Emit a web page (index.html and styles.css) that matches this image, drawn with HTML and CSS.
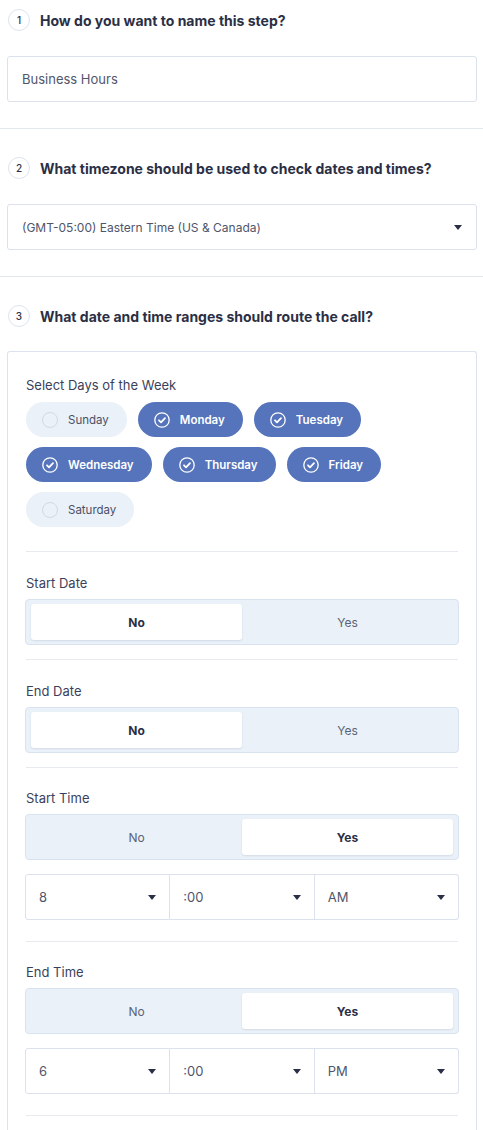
FILE: index.html
```html
<!DOCTYPE html>
<html>
<head>
<meta charset="utf-8">
<link rel="stylesheet" href="styles.css">
</head>
<body>
<div class="page">
  <section class="step first">
    <div class="q"><span class="num">1</span><span class="qtext">How do you want to name this step?</span></div>
    <div class="field">Business Hours</div>
  </section>
  <section class="step">
    <div class="q"><span class="num">2</span><span class="qtext">What timezone should be used to check dates and times?</span></div>
    <div class="field select"><span>(GMT-05:00) Eastern Time (US &amp; Canada)</span><span class="caret"></span></div>
  </section>
  <section class="step last">
    <div class="q"><span class="num">3</span><span class="qtext">What date and time ranges should route the call?</span></div>
    <div class="card">
      <div class="block days">
        <div class="label">Select Days of the Week</div>
        <div class="pills">
          <span class="pill"><span class="ring"></span>Sunday</span>
          <span class="pill on"><svg class="chk" viewBox="0 0 16 16"><circle cx="8" cy="8" r="7.2"/><path d="M5 8.3l2 2 4-4.2"/></svg>Monday</span>
          <span class="pill on"><svg class="chk" viewBox="0 0 16 16"><circle cx="8" cy="8" r="7.2"/><path d="M5 8.3l2 2 4-4.2"/></svg>Tuesday</span>
          <span class="pill on"><svg class="chk" viewBox="0 0 16 16"><circle cx="8" cy="8" r="7.2"/><path d="M5 8.3l2 2 4-4.2"/></svg>Wednesday</span>
          <span class="pill on"><svg class="chk" viewBox="0 0 16 16"><circle cx="8" cy="8" r="7.2"/><path d="M5 8.3l2 2 4-4.2"/></svg>Thursday</span>
          <span class="pill on"><svg class="chk" viewBox="0 0 16 16"><circle cx="8" cy="8" r="7.2"/><path d="M5 8.3l2 2 4-4.2"/></svg>Friday</span>
          <span class="pill"><span class="ring"></span>Saturday</span>
        </div>
      </div>
      <div class="block">
        <div class="label">Start Date</div>
        <div class="toggle"><span class="opt active">No</span><span class="opt">Yes</span></div>
      </div>
      <div class="block">
        <div class="label">End Date</div>
        <div class="toggle"><span class="opt active">No</span><span class="opt">Yes</span></div>
      </div>
      <div class="block timeblock">
        <div class="label">Start Time</div>
        <div class="toggle"><span class="opt">No</span><span class="opt active">Yes</span></div>
        <div class="selects">
          <div class="sel"><span>8</span><span class="caret"></span></div>
          <div class="sel"><span>:00</span><span class="caret"></span></div>
          <div class="sel"><span>AM</span><span class="caret"></span></div>
        </div>
      </div>
      <div class="block timeblock">
        <div class="label">End Time</div>
        <div class="toggle"><span class="opt">No</span><span class="opt active">Yes</span></div>
        <div class="selects">
          <div class="sel"><span>6</span><span class="caret"></span></div>
          <div class="sel"><span>:00</span><span class="caret"></span></div>
          <div class="sel"><span>PM</span><span class="caret"></span></div>
        </div>
      </div>
      <div class="block tail"></div>
    </div>
  </section>
</div>
</body>
</html>
```
FILE: styles.css
```css
* { box-sizing: border-box; }
html, body { margin: 0; padding: 0; background: #fff; }
body {
  font-family: Inter, "Noto Sans", sans-serif;
  color: #2b2f45;
  width: 483px;
  height: 1130px;
  overflow: hidden;
}
.step {
  padding: 28px 6px 26px 7px;
  border-bottom: 1px solid #e3e7ee;
}
.step.first { padding-top: 9px; }
.step.last { border-bottom: none; padding-bottom: 0; }
.q {
  display: flex;
  align-items: center;
  height: 22px;
  margin-bottom: 25px;
}
.num {
  width: 22px;
  height: 22px;
  margin-left: 1px;
  border: 1px solid #dde3ee;
  border-radius: 50%;
  display: flex;
  align-items: center;
  justify-content: center;
  font-size: 10px;
  font-weight: 500;
  color: #2b2f45;
}
.qtext {
  margin-left: 10px;
  font-size: 14px;
  font-weight: 700;
  color: #2b2f45;
}
.field {
  height: 46px;
  border: 1px solid #dbe2ec;
  border-radius: 3px;
  display: flex;
  align-items: center;
  padding: 0 14px;
  font-size: 13px;
  color: #4f566b;
}
.field.select { justify-content: space-between; font-size: 12px; }
.caret {
  width: 0; height: 0;
  border-left: 4.5px solid transparent;
  border-right: 4.5px solid transparent;
  border-top: 5px solid #2b2f45;
}
.q + .card { margin-top: -1px; }
.card {
  border: 1px solid #dde3ee;
  border-bottom: none;
  border-radius: 3px 3px 0 0;
  padding: 0 18px;
  height: 800px;
}
.block {
  border-bottom: 1px solid #e6eaf0;
  padding: 23px 0 14px;
}
.block.days { padding: 25px 0 24px; }
.block.timeblock { padding: 22px 0 21px; }
.block.tail { border-bottom: none; }
.label {
  font-size: 13px;
  color: #3b3f5c;
  line-height: 16px;
  margin-bottom: 8px;
}
.days .label { margin-bottom: 9px; }
.pills {
  display: flex;
  flex-wrap: wrap;
  gap: 10px 11px;
}
.pill {
  height: 35px;
  border-radius: 18px;
  background: #ebf1f8;
  display: inline-flex;
  align-items: center;
  padding: 0 18px 0 16px;
  font-size: 11.5px;
  color: #4a4f68;
  font-weight: 400;
}
.pill.on {
  background: #5574bc;
  color: #fff;
  font-weight: 600;
}
.ring {
  width: 16px; height: 16px;
  border-radius: 50%;
  border: 1px solid #d3d9e3;
  margin-right: 10px;
}
.chk {
  width: 16px; height: 16px;
  margin-right: 10px;
  fill: none;
  stroke: #fff;
  stroke-width: 1.3;
}
.chk path { stroke-width: 1.8; stroke-linecap: round; stroke-linejoin: round; }
.toggle {
  margin: 0 -1px;
  height: 46px;
  background: #eaf1f8;
  border: 1px solid #d9e3ef;
  border-radius: 4px;
  padding: 4px 5px;
  display: flex;
}
.opt {
  flex: 1;
  display: flex;
  align-items: center;
  justify-content: center;
  font-size: 12px;
  color: #5c6275;
  border-radius: 3px;
}
.opt.active {
  background: #fff;
  color: #2b2f45;
  font-weight: 700;
  box-shadow: 0 1px 2px rgba(40, 60, 100, 0.12);
}
.selects {
  margin: 14px -1px 0;
  display: flex;
  height: 46px;
}
.sel {
  flex: 1;
  border: 1px solid #dbe2ec;
  display: flex;
  align-items: center;
  justify-content: space-between;
  padding: 0 13px;
  font-size: 13px;
  color: #4f566b;
}
.sel + .sel { border-left: none; }
.sel:first-child { border-radius: 3px 0 0 3px; }
.sel:last-child { border-radius: 0 3px 3px 0; }
```
